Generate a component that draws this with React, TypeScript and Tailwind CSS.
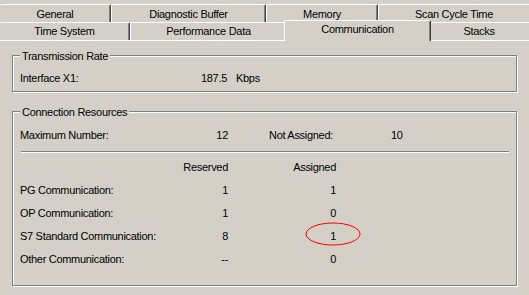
import React from "react";

type TabProps = { label: string; cls: string };

function Tab({ label, cls }: TabProps) {
  return (
    <div
      className={`shrink-0 flex justify-center border-t border-t-white border-r border-r-[#404040] shadow-[inset_-1px_0_0_#808080] rounded-tl-[2px] rounded-tr-[2px] bg-[#d4d0c8] whitespace-nowrap ${cls}`}
    >
      <span>{label}</span>
    </div>
  );
}

function Group({ label, cls, children }: { label: string; cls: string; children: React.ReactNode }) {
  return (
    <div
      className={`relative ml-[12px] w-[505px] border border-[#808080] shadow-[1px_1px_0_#fff,inset_1px_1px_0_#fff] ${cls}`}
    >
      <div className="absolute left-[7px] -top-[6px] px-[2px] bg-[#d4d0c8] whitespace-nowrap">{label}</div>
      {children}
    </div>
  );
}

const rows = [
  { label: "PG Communication:", reserved: "1", assigned: "1" },
  { label: "OP Communication:", reserved: "1", assigned: "0" },
  { label: "S7 Standard Communication:", reserved: "8", assigned: "1", mark: true },
  { label: "Other Communication:", reserved: "--", assigned: "0" },
];

export default function App() {
  return (
    <div className="w-[529px] h-[295px] overflow-hidden bg-[#d4d0c8] text-black text-[11px] leading-[12px] tracking-[-0.3px] font-['Liberation_Sans',Arial,sans-serif]">
      {/* Tab row 1 */}
      <div className="flex h-[18px] mt-[4px]">
        <Tab label="General" cls="w-[111px] pt-[3px]" />
        <Tab label="Diagnostic Buffer" cls="w-[155px] pt-[3px] border-l border-l-white" />
        <Tab label="Memory" cls="w-[112px] pt-[3px] border-l border-l-white" />
        <Tab label="Scan Cycle Time" cls="w-[170px] pr-[18px] pt-[3px] border-l border-l-white" />
      </div>
      {/* Tab row 2 */}
      <div className="flex h-[18px]">
        <Tab label="Time System" cls="w-[130px] pt-[2px]" />
        <Tab label="Performance Data" cls="w-[157px] pt-[2px] border-l border-l-white" />
        <div className="relative z-10 shrink-0 -ml-[3px] -mt-[2px] h-[21px] w-[147px] flex justify-center pt-[2px] border-t border-t-white border-l border-l-white border-r border-r-[#404040] shadow-[inset_-1px_0_0_#808080] rounded-tl-[2px] rounded-tr-[2px] bg-[#d4d0c8] whitespace-nowrap">
          <span>Communication</span>
        </div>
        <Tab label="Stacks" cls="w-[110px] pr-[13px] pt-[2px]" />
      </div>
      {/* Panel */}
      <div className="border-t border-t-white pt-[14px]">
        <Group label="Transmission Rate" cls="h-[37px] pt-[10px] pl-[7px]">
          <div className="flex h-[23px] items-center whitespace-nowrap">
            <span className="w-[150px]">Interface X1:</span>
            <span className="w-[57px] text-right">187.5</span>
            <span className="ml-[9px]">Kbps</span>
          </div>
        </Group>
        <Group label="Connection Resources" cls="mt-[19px] h-[175px] pt-[11px]">
          <div className="flex h-[23px] items-center pl-[7px] whitespace-nowrap">
            <span className="w-[150px]">Maximum Number:</span>
            <span className="w-[58px] text-right">12</span>
            <span className="w-[41px]" />
            <span className="w-[122px]">Not Assigned:</span>
            <span>10</span>
          </div>
          <div className="mt-[5px] ml-[8px] mr-[7px] h-px bg-[#808080] shadow-[0_1px_0_#fff]" />
          <div className="mt-[3px]">
            <div className="flex h-[23px] items-center pl-[7px] whitespace-nowrap">
              <span className="w-[150px]" />
              <span className="w-[58px] text-right">Reserved</span>
              <span className="w-[108px] text-right">Assigned</span>
            </div>
            {rows.map((r) => (
              <div key={r.label} className="relative flex h-[23px] items-center pl-[7px] whitespace-nowrap">
                <span className="w-[150px]">{r.label}</span>
                <span className="w-[58px] text-right">{r.reserved}</span>
                <span className="w-[108px] text-right">{r.assigned}</span>
                {r.mark && (
                  <svg className="absolute left-[292px] -top-[2px]" width="56" height="24" viewBox="0 0 56 24">
                    <ellipse cx="28" cy="12" rx="27" ry="11" fill="none" stroke="#ff0000" strokeWidth="1" />
                  </svg>
                )}
              </div>
            ))}
          </div>
        </Group>
      </div>
    </div>
  );
}
